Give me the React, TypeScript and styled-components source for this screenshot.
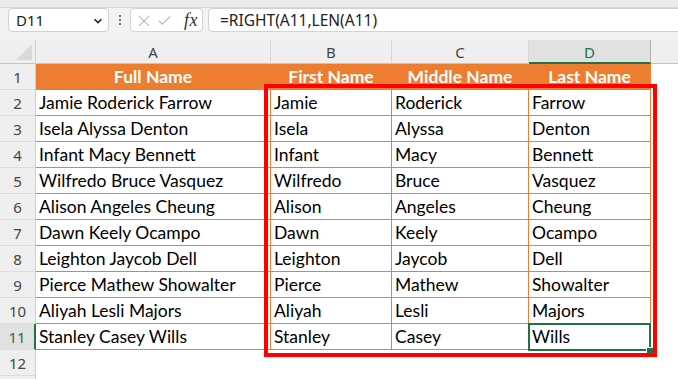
import styled, { createGlobalStyle, css } from 'styled-components';

const GlobalStyle = createGlobalStyle`
  html, body {
    margin: 0;
    padding: 0;
    background: #ffffff;
  }
  * {
    box-sizing: border-box;
  }
`;

const COLUMNS = ['A', 'B', 'C', 'D'];
const HEADERS = ['Full Name', 'First Name', 'Middle Name', 'Last Name'];
const ROWS = [
  ['Jamie Roderick Farrow', 'Jamie', 'Roderick', 'Farrow'],
  ['Isela Alyssa Denton', 'Isela', 'Alyssa', 'Denton'],
  ['Infant Macy Bennett', 'Infant', 'Macy', 'Bennett'],
  ['Wilfredo Bruce Vasquez', 'Wilfredo', 'Bruce', 'Vasquez'],
  ['Alison Angeles Cheung', 'Alison', 'Angeles', 'Cheung'],
  ['Dawn Keely Ocampo', 'Dawn', 'Keely', 'Ocampo'],
  ['Leighton Jaycob Dell', 'Leighton', 'Jaycob', 'Dell'],
  ['Pierce Mathew Showalter', 'Pierce', 'Mathew', 'Showalter'],
  ['Aliyah Lesli Majors', 'Aliyah', 'Lesli', 'Majors'],
  ['Stanley Casey Wills', 'Stanley', 'Casey', 'Wills'],
];

const ACTIVE_COL = 3;
const ACTIVE_ROW = 11;

export default function App() {
  return (
    <>
      <GlobalStyle />
      <Window>
        <RibbonEdge />
        <FormulaBar>
          <NameBox>
            <span>D11</span>
            <svg width="10" height="6" viewBox="0 0 10 6">
              <path d="M1.5 1.2 L5 4.6 L8.5 1.2" fill="none" stroke="#222" strokeWidth="1.6" />
            </svg>
          </NameBox>
          <Dots>
            <i />
            <i />
            <i />
          </Dots>
          <ActionBox>
            <svg width="14" height="14" viewBox="0 0 14 14">
              <path d="M1 1 L13 13 M13 1 L1 13" stroke="#b4b4b4" strokeWidth="1.2" />
            </svg>
            <svg width="15" height="11" viewBox="0 0 15 11">
              <path d="M0.8 5.6 L5 9.8 L14.2 0.8" fill="none" stroke="#b4b4b4" strokeWidth="1.2" />
            </svg>
            <FxLabel>fx</FxLabel>
          </ActionBox>
          <FormulaInput>=RIGHT(A11,LEN(A11)</FormulaInput>
        </FormulaBar>

        <Sheet>
          <Corner />
          {COLUMNS.map((c, i) => (
            <ColHeader key={c} $active={i === ACTIVE_COL}>
              {c}
            </ColHeader>
          ))}
          <ColHeader $filler />

          <RowHeader>1</RowHeader>
          {HEADERS.map((h) => (
            <TitleCell key={h}>{h}</TitleCell>
          ))}
          <EmptyCell />

          {ROWS.map((row, r) => {
            const rowNo = r + 2;
            return [
              <RowHeader key={`h${rowNo}`} $active={rowNo === ACTIVE_ROW}>
                {rowNo}
              </RowHeader>,
              ...row.map((value, c) =>
                rowNo === ACTIVE_ROW && c === ACTIVE_COL ? (
                  <ActiveCell key={`${rowNo}-${c}`}>
                    {value}
                    <FillHandle />
                  </ActiveCell>
                ) : (
                  <DataCell key={`${rowNo}-${c}`}>{value}</DataCell>
                ),
              ),
              <EmptyCell key={`e${rowNo}`} />,
            ];
          })}

          <RowHeader>12</RowHeader>
          <BlankRow />
          <RowHeader />
          <BlankRow />
        </Sheet>

        <SelectionFrame />
      </Window>
    </>
  );
}

const Window = styled.div`
  position: relative;
  width: 678px;
  height: 379px;
  overflow: hidden;
  background: #f3f3f3;
  font-family: 'Noto Sans', 'Open Sans', sans-serif;
`;

const RibbonEdge = styled.div`
  height: 8px;
  background: #ececec;
  border-bottom: 1px solid #d8d8d8;
`;

const FormulaBar = styled.div`
  display: flex;
  align-items: center;
  height: 32px;
  padding: 0 0 8px 8px;
`;

const boxBase = css`
  height: 24px;
  background: #ffffff;
  border: 1px solid #d2d2d2;
  border-radius: 4px;
`;

const NameBox = styled.div`
  ${boxBase};
  width: 101px;
  display: flex;
  align-items: center;
  justify-content: space-between;
  padding: 0 5px 0 7px;
  font-size: 15px;
  color: #222;

  svg {
    margin-top: 1px;
  }
`;

const Dots = styled.div`
  width: 21px;
  display: flex;
  flex-direction: column;
  align-items: center;
  gap: 2px;

  i {
    width: 2px;
    height: 2px;
    border-radius: 50%;
    background: #444;
  }
`;

const ActionBox = styled.div`
  ${boxBase};
  width: 73px;
  display: flex;
  align-items: center;
  padding: 0 4px 0 7px;
  gap: 8px;

  svg:first-child {
    margin-top: 1px;
  }
`;

const FxLabel = styled.span`
  font-family: 'Liberation Serif', 'DejaVu Serif', serif;
  font-style: italic;
  font-size: 18px;
  color: #333;
  margin-left: 5px;
  letter-spacing: 0.5px;
`;

const FormulaInput = styled.div`
  ${boxBase};
  flex: 1;
  margin-left: 5px;
  margin-right: -6px;
  display: flex;
  align-items: center;
  padding-left: 11px;
  font-size: 15.5px;
  color: #222;
`;

const Sheet = styled.div`
  display: grid;
  grid-template-columns: 36px 235px 121px 137px 122px 1fr;
  grid-template-rows: 24px;
  grid-auto-rows: 26px;
  background: #ffffff;
`;

const headerBase = css`
  background: #efefef;
  color: #444;
  font-family: 'Noto Sans', 'Open Sans', sans-serif;
  font-size: 15px;
  display: flex;
  align-items: center;
  justify-content: center;
`;

const Corner = styled.div`
  ${headerBase};
  position: relative;
  border-right: 1px solid #d0d0d0;
  border-bottom: 1px solid #c4c4c4;

  &::after {
    content: '';
    position: absolute;
    right: 3px;
    bottom: 3px;
    width: 16px;
    height: 16px;
    background: #d9d9d9;
    clip-path: polygon(100% 0, 100% 100%, 0 100%);
  }
`;

const ColHeader = styled.div<{ $active?: boolean; $filler?: boolean }>`
  ${headerBase};
  border-right: 1px solid #d6d6d6;
  border-bottom: 1px solid #c4c4c4;
  padding-top: 1px;

  ${({ $active }) =>
    $active &&
    css`
      background: #e1e1e1;
      color: #217346;
      border-right-color: #ababab;
      border-bottom: 2px solid #217346;
    `}

  ${({ $filler }) =>
    $filler &&
    css`
      border-right: none;
    `}
`;

const RowHeader = styled.div<{ $active?: boolean }>`
  ${headerBase};
  border-right: 1px solid #d0d0d0;
  border-bottom: 1px solid #dcdcdc;

  ${({ $active }) =>
    $active &&
    css`
      background: #e1e1e1;
      color: #217346;
      border-right: 2px solid #217346;
    `}
`;

const cellText = css`
  font-family: Lato, 'Liberation Sans', sans-serif;
  font-size: 17.5px;
  line-height: 26px;
  white-space: nowrap;
  overflow: hidden;
`;

const TitleCell = styled.div`
  ${cellText};
  background: #ed7d31;
  color: #ffffff;
  font-weight: 700;
  text-align: center;
  border-right: 1px solid #ed7d31;
  border-bottom: 1px solid #ed7d31;
`;

const DataCell = styled.div`
  ${cellText};
  color: #000000;
  padding-left: 3px;
  border-right: 1px solid #ed7d31;
  border-bottom: 1px solid #ed7d31;
`;

const ActiveCell = styled(DataCell)`
  position: relative;
  overflow: visible;

  &::after {
    content: '';
    position: absolute;
    top: -1px;
    left: -1px;
    right: -1px;
    bottom: -2px;
    border: 2px solid #217346;
    pointer-events: none;
  }
`;

const FillHandle = styled.span`
  position: absolute;
  right: -3px;
  bottom: -4px;
  width: 7px;
  height: 6px;
  background: #217346;
  border-left: 1px solid #ffffff;
  border-top: 1px solid #ffffff;
  z-index: 1;
`;

const EmptyCell = styled.div`
  background: #ffffff;
`;

const BlankRow = styled.div`
  grid-column: 2 / -1;
  background: #ffffff;
`;

const SelectionFrame = styled.div`
  position: absolute;
  left: 264px;
  top: 84px;
  width: 393px;
  height: 273px;
  border: 4px solid #ff0000;
  pointer-events: none;
`;
